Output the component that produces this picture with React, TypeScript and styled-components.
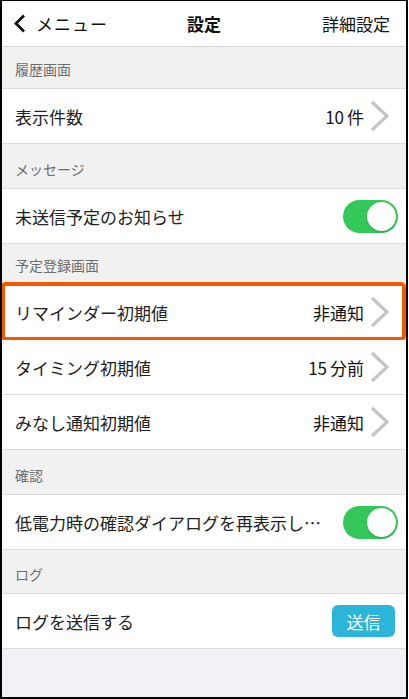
import React from "react";
import styled, { createGlobalStyle } from "styled-components";

const Global = createGlobalStyle`
  html, body { margin: 0; padding: 0; background: #fff; }
  body { font-family: "Noto Sans CJK JP", "Noto Sans", sans-serif; }
`;

const Frame = styled.div`
  box-sizing: border-box;
  width: 408px;
  height: 699px;
  border-left: 2px solid #000;
  border-right: 2px solid #000;
  border-top: 1px solid #000;
  border-bottom: 2px solid #000;
  background: #f2f2f6;
  display: flex;
  flex-direction: column;
  overflow: hidden;
`;

const Header = styled.header`
  box-sizing: border-box;
  height: 46px;
  flex: none;
  background: #fff;
  border-bottom: 1px solid #d8d8d8;
  display: grid;
  grid-template-columns: 1fr auto 1fr;
  align-items: center;
  padding: 0 16px 0 10px;
  color: #111;
  font-size: 17px;
`;

const Back = styled.div`
  display: flex;
  align-items: center;
  gap: 9px;
  letter-spacing: 1px;
`;

const Title = styled.div`
  font-weight: 700;
  font-size: 17px;
  padding-left: 6px;
`;

const HeaderRight = styled.div`
  justify-self: end;
`;

const SectionHead = styled.div<{ $h: number }>`
  box-sizing: border-box;
  height: ${(p) => p.$h}px;
  flex: none;
  background: #f1f1f1;
  border-bottom: 1px solid #dcdcdc;
  display: flex;
  align-items: flex-end;
  padding: 0 0 9px 13px;
  font-size: 14px;
  color: #6e6e6e;
`;

const Row = styled.div<{ $pr?: number }>`
  position: relative;
  box-sizing: border-box;
  height: 55px;
  flex: none;
  background: #fff;
  border-bottom: 1px solid #dcdcdc;
  display: flex;
  align-items: center;
  justify-content: space-between;
  padding: 0 ${(p) => p.$pr ?? 8}px 0 13px;
  font-size: 17px;
  color: #222;
`;

const Label = styled.span`
  white-space: nowrap;
  min-width: 0;
`;

const Trail = styled.div`
  display: flex;
  align-items: center;
  gap: 6px;
  flex: none;
`;

const Value = styled.span`
  font-size: 17px;
  color: #111;
`;

const Unit = styled.span`
  margin-left: 3px;
`;

const Highlight = styled.div`
  position: absolute;
  left: -1px;
  right: 0px;
  top: -3px;
  bottom: -2px;
  border: 4px solid #f05a00;
  border-radius: 5px;
  pointer-events: none;
`;

const Switch = styled.div`
  box-sizing: border-box;
  width: 55px;
  height: 33px;
  border-radius: 17px;
  background: #34c759;
  padding: 2px;
  display: flex;
  justify-content: flex-end;
  margin-left: 12px;
  flex: none;
`;

const Knob = styled.div`
  width: 29px;
  height: 29px;
  border-radius: 50%;
  background: #fff;
  box-shadow: 0 1px 2px rgba(0, 0, 0, 0.2);
`;

const SendButton = styled.button`
  width: 63px;
  height: 32px;
  border: none;
  border-radius: 6px;
  background: #2bb6d9;
  color: #fff;
  font-family: inherit;
  font-size: 17px;
  padding: 0;
  margin-right: 3px;
`;

const Chevron = () => (
  <svg width="19" height="32" viewBox="0 0 19 32">
    <path d="M2 2 L17 16 L2 30" fill="none" stroke="#c4c4c4" strokeWidth="3.2" />
  </svg>
);

const BackChevron = () => (
  <svg width="15" height="19" viewBox="0 0 15 19">
    <path d="M12 1.5 L4 9.5 L12 17.5" fill="none" stroke="#111" strokeWidth="2.8" />
  </svg>
);

const NavRow = ({ label, value, highlight }: { label: string; value: React.ReactNode; highlight?: boolean }) => (
  <Row $pr={17}>
    <Label>{label}</Label>
    <Trail>
      <Value>{value}</Value>
      <Chevron />
    </Trail>
    {highlight && <Highlight />}
  </Row>
);

const ToggleRow = ({ label }: { label: string }) => (
  <Row>
    <Label>{label}</Label>
    <Switch>
      <Knob />
    </Switch>
  </Row>
);

export default function App() {
  return (
    <>
      <Global />
      <Frame>
        <Header>
          <Back>
            <BackChevron />
            <span>メニュー</span>
          </Back>
          <Title>設定</Title>
          <HeaderRight>詳細設定</HeaderRight>
        </Header>
        <SectionHead $h={42}>履歴画面</SectionHead>
        <NavRow label="表示件数" value={<>10<Unit>件</Unit></>} />
        <SectionHead $h={45}>メッセージ</SectionHead>
        <ToggleRow label="未送信予定のお知らせ" />
        <SectionHead $h={41}>予定登録画面</SectionHead>
        <NavRow label="リマインダー初期値" value="非通知" highlight />
        <NavRow label="タイミング初期値" value={<>15<Unit>分前</Unit></>} />
        <NavRow label="みなし通知初期値" value="非通知" />
        <SectionHead $h={45}>確認</SectionHead>
        <ToggleRow label="低電力時の確認ダイアログを再表示し…" />
        <SectionHead $h={44}>ログ</SectionHead>
        <Row>
          <Label>ログを送信する</Label>
          <SendButton>送信</SendButton>
        </Row>
      </Frame>
    </>
  );
}
